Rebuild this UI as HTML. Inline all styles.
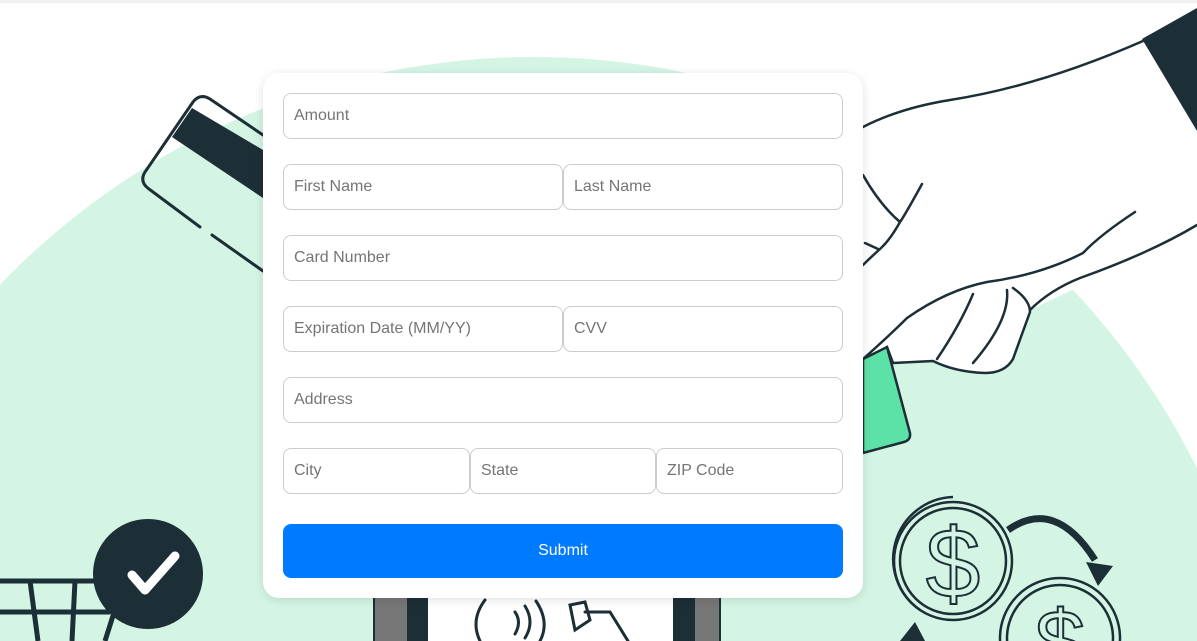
<!DOCTYPE html>
<html><head><meta charset="utf-8"><style>
html,body{margin:0;padding:0;width:1197px;height:641px;overflow:hidden;background:#fff;font-family:"Liberation Sans",Arial,sans-serif}
#bg{position:absolute;left:0;top:0;display:block}
.topline{position:absolute;left:0;top:0;width:1197px;height:3px;background:#f0f0f0}
.card{position:absolute;left:263px;top:73px;width:600px;height:525px;background:#fff;border-radius:16px;box-shadow:0 2px 10px rgba(0,0,0,.12)}
.in{position:absolute;border:1px solid #ccc;border-radius:8px;background:#fff;box-sizing:border-box;height:46px;color:#757575;font-size:16px;line-height:44px;padding-left:10px}
.btn{position:absolute;left:20px;top:451px;width:560px;height:54px;background:#007bff;border-radius:8px;color:#fff;font-size:16px;text-align:center;line-height:54px}
</style></head><body>
<svg id="bg" width="1197" height="641" viewBox="0 0 1197 641">
<circle cx="534" cy="797" r="740" fill="#d4f5e4"/>
<polygon points="192,108 263,150 263,198 172,137" fill="#1c2e36"/>
<g stroke="#1c2e36" stroke-width="3" fill="none" stroke-linecap="round">
<path d="M263 135 L210 99 Q200 93 193 102 L145 172 Q139 182 149 189 L200 227"/>
<path d="M212 235 L263 271"/>
</g>
<path d="M863 127 Q900 108 950 100 Q1040 85 1143 41 L1197 8 L1197 225 Q1130 263 1030 310 L1013 359 Q1005 373 985 373 Q955 372 933 361 L893 363 L887 347 L863 359 Z" fill="#fff"/>
<polygon points="1142,39 1197,8 1197,131" fill="#1c2e36"/>
<path d="M887 347 L910 433 Q911 440 904 442 L863 453 L863 359 Z" fill="#5ce1a6" stroke="#1c2e36" stroke-width="2.5"/>
<g stroke="#1c2e36" stroke-width="2.5" fill="none" stroke-linecap="round" stroke-linejoin="round">
<path d="M863 127 Q900 108 950 100 Q1040 86 1143 41"/>
<path d="M1197 225 Q1150 253 1080 278 Q1050 290 1030 310"/>
<path d="M1013 288 Q1030 300 1030 312 L1013 359 Q1005 373 985 373 Q955 372 933 361 L893 363 L887 347"/>
<path d="M1135 212 Q1100 235 1083 253 Q1040 275 987 282 Q947 290 907 318 Q890 335 863 359"/>
<path d="M973 294 Q960 325 937 359 M1007 290 Q1010 320 973 363"/>
<path d="M863 175 Q880 205 900 222 M922 184 Q905 215 900 222 Q890 240 880 249 Q870 258 863 265 M865 243 L878 249"/>
</g>
<g stroke="#1c2e36" stroke-width="2.5" fill="none">
<path d="M920 610 A62 62 0 0 1 953 497"/>
<circle cx="953" cy="561" r="59"/><circle cx="953" cy="561" r="53"/>
<text x="953" y="597" font-size="98" font-family="Liberation Sans" text-anchor="middle" fill="none" stroke-width="2">$</text>
<circle cx="1060" cy="638" r="60"/><circle cx="1060" cy="638" r="53"/>
<text x="1060" y="673" font-size="90" font-family="Liberation Sans" text-anchor="middle" fill="none" stroke-width="2">$</text>
<path d="M1008 530 Q1055 497 1095 560" stroke-width="7"/>
</g>
<polygon points="1086,562 1113,566 1098,586" fill="#1c2e36"/>
<polygon points="900,641 915,622 925,641" fill="#1c2e36"/>
<g stroke="#1c2e36" stroke-width="5" fill="none">
<path d="M0 581 L100 581 M0 612 L110 612 M30 581 L38 641 M75 581 L72 641 M118 600 L105 641"/>
</g>
<circle cx="148" cy="574" r="55" fill="#1c2e36"/>
<path d="M132 575 L145 590 L175 556" stroke="#fff" stroke-width="9" fill="none" stroke-linecap="round" stroke-linejoin="round"/>
<rect x="373" y="598" width="55" height="43" fill="#1c2e36"/>
<rect x="375" y="598" width="32" height="43" fill="#777"/>
<rect x="428" y="598" width="245" height="43" fill="#fff"/>
<rect x="673" y="598" width="48" height="43" fill="#1c2e36"/>
<rect x="695" y="598" width="24" height="43" fill="#777"/>
<g stroke="#1c2e36" stroke-width="3" fill="none" stroke-linecap="round">
<path d="M485 600 Q470 620 480 641"/>
<path d="M515 612 Q522 622 515 634 M525 606 Q535 622 525 638 M536 601 Q550 622 540 641"/>
<path d="M570 605 L585 602 L590 620 L575 630 Z M585 612 L610 612 L628 641"/>
</g>
</svg>
<div class="topline"></div>
<div class="card">
<div class="in" style="left:20px;top:20px;width:560px">Amount</div>
<div class="in" style="left:20px;top:91px;width:280px">First Name</div>
<div class="in" style="left:300px;top:91px;width:280px">Last Name</div>
<div class="in" style="left:20px;top:162px;width:560px">Card Number</div>
<div class="in" style="left:20px;top:233px;width:280px">Expiration Date (MM/YY)</div>
<div class="in" style="left:300px;top:233px;width:280px">CVV</div>
<div class="in" style="left:20px;top:304px;width:560px">Address</div>
<div class="in" style="left:20px;top:375px;width:187px">City</div>
<div class="in" style="left:207px;top:375px;width:186px">State</div>
<div class="in" style="left:393px;top:375px;width:187px">ZIP Code</div>
<div class="btn">Submit</div>
</div>
</body></html>
